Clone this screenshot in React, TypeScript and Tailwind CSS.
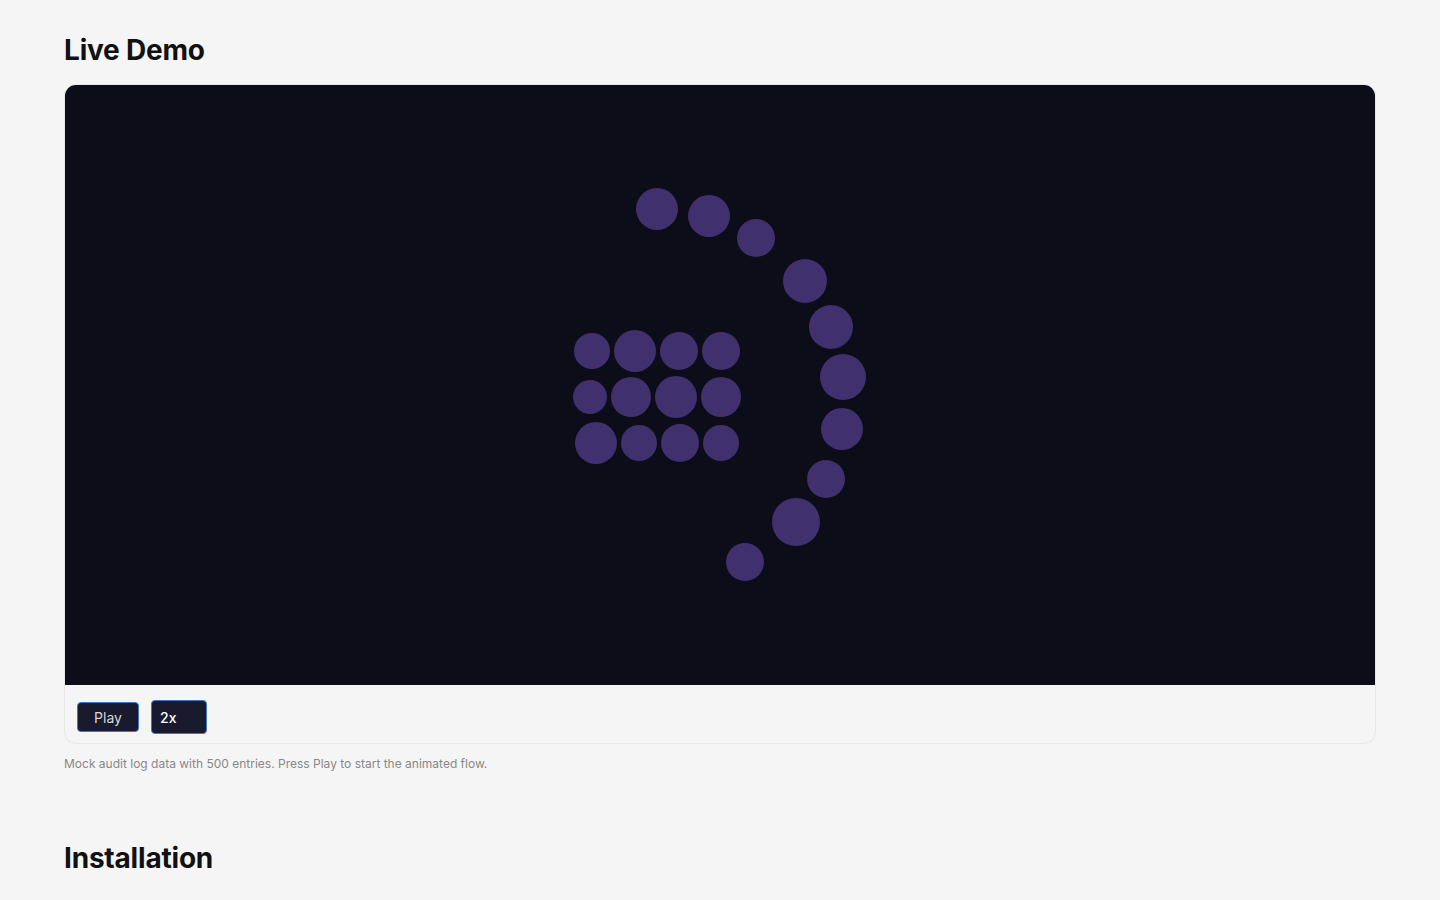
import { useState } from 'react'

const nodes: [number, number, number][] = [
  // arc
  [657, 209, 21],
  [709, 216, 21],
  [756, 238, 19],
  [805, 281, 22],
  [831, 327, 22],
  [843, 377, 23],
  [842, 429, 21],
  [826, 479, 19],
  [796, 522, 24],
  [745, 562, 19],
  // grid
  [592, 351, 18],
  [635, 351, 21],
  [679, 351, 19],
  [721, 351, 19],
  [590, 397, 17],
  [631, 397, 20],
  [676, 397, 21],
  [721, 397, 20],
  [596, 443, 21],
  [639, 443, 18],
  [680, 443, 19],
  [721, 443, 18],
]

const FlowCanvas = () => (
  <svg className="block w-full h-[600px]" viewBox="0 0 1310 600" preserveAspectRatio="xMinYMin slice">
    {nodes.map(([cx, cy, r], i) => (
      <circle key={i} cx={cx - 65} cy={cy - 85} r={r} fill="#40306e" />
    ))}
  </svg>
)

export default function App() {
  const [speed, setSpeed] = useState('2x')

  return (
    <div className="min-h-screen bg-[#f5f5f5] px-16 pt-[33px] pb-10 font-['Inter','Liberation_Sans',sans-serif]">
      <h2 className="text-[28px] leading-[34px] font-bold text-[#111] tracking-[-0.2px]">Live Demo</h2>

      <div className="mt-[17px] rounded-xl border border-[#e6e6e6] overflow-hidden bg-[#f5f5f5]">
        <div className="bg-[#0d0d19]">
          <FlowCanvas />
        </div>
        <div className="flex items-center gap-3 px-3 pt-[6px] h-[58px]">
          <button className="h-[30px] w-[62px] rounded-[4px] border border-[#3a78c9] bg-[#1a1a2e] text-[14px] text-[#d8d8d8]">
            Play
          </button>
          <select
            value={speed}
            onChange={(e) => setSpeed(e.target.value)}
            className="h-[34px] w-[56px] appearance-none rounded-[4px] border border-[#3a78c9] bg-[#1a1a2e] pl-2 text-[14px] font-medium text-white outline-none"
          >
            <option value="1x">1x</option>
            <option value="2x">2x</option>
            <option value="4x">4x</option>
          </select>
        </div>
      </div>

      <p className="mt-[12px] text-[12px] leading-4 text-[#888]">
        Mock audit log data with 500 entries. Press Play to start the animated flow.
      </p>

      <h2 className="mt-[69px] text-[28px] leading-[34px] font-bold text-[#111] tracking-[-0.2px]">Installation</h2>
    </div>
  )
}
